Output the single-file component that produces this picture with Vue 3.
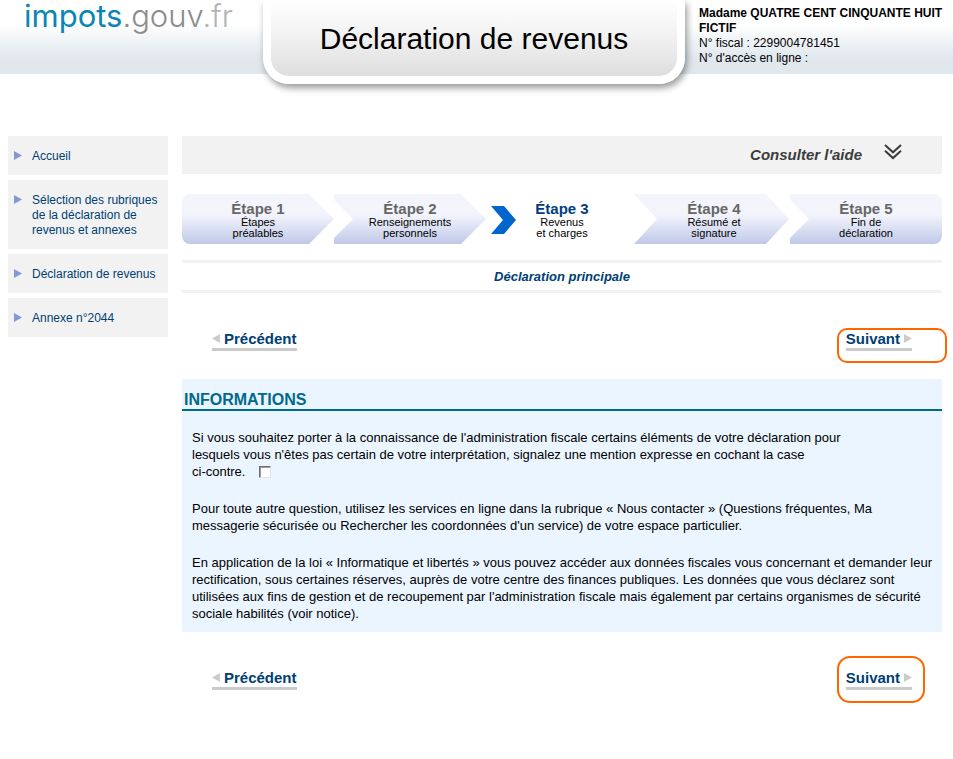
<script setup>
import { ref } from 'vue'

const menu = [
  'Accueil',
  'Sélection des rubriques de la déclaration de revenus et annexes',
  'Déclaration de revenus',
  'Annexe n°2044',
]

const steps = [
  { title: 'Étape 1', lines: ['Étapes', 'préalables'], kind: 'first' },
  { title: 'Étape 2', lines: ['Renseignements', 'personnels'], kind: 'middle' },
  { title: 'Étape 3', lines: ['Revenus', 'et charges'], kind: 'current' },
  { title: 'Étape 4', lines: ['Résumé et', 'signature'], kind: 'next' },
  { title: 'Étape 5', lines: ['Fin de', 'déclaration'], kind: 'last' },
]

const mention = ref(false)
</script>

<template>
  <div class="page">
    <header class="top">
      <a class="logo" href="#"><span class="logo-blue">impots</span><span class="logo-grey">.gouv</span><span class="logo-light">.fr</span></a>
      <h1 class="banner">Déclaration de revenus</h1>
      <div class="user">
        <strong>Madame QUATRE CENT CINQUANTE HUIT FICTIF</strong>
        <span>N° fiscal : 2299004781451</span>
        <span>N° d'accès en ligne :</span>
      </div>
    </header>

    <div class="columns">
      <nav class="side">
        <a v-for="item in menu" :key="item" class="side-link" href="#">
          <svg class="side-arrow" width="8" height="9" viewBox="0 0 8 9"><path d="M0 0 L8 4.5 L0 9 Z" fill="#8399d6" /></svg>
          <span>{{ item }}</span>
        </a>
      </nav>

      <main class="main">
        <button class="help" type="button">
          <span>Consulter l'aide</span>
          <svg width="18" height="17" viewBox="0 0 18 17" fill="none" stroke="#3c3c3c" stroke-width="2">
            <path d="M1 1 L9 8.3 L17 1" />
            <path d="M1 6.8 L9 14.1 L17 6.8" />
          </svg>
        </button>

        <ol class="steps">
          <li v-for="step in steps" :key="step.title" class="step" :class="step.kind">
            <svg v-if="step.kind === 'current'" class="marker" width="25" height="28" viewBox="0 0 25 28"><path d="M0 0 H13 L25 14 L13 28 H0 L12 14 Z" fill="#0066cc" /></svg>
            <span class="step-title">{{ step.title }}</span>
            <span v-for="line in step.lines" :key="line" class="step-line">{{ line }}</span>
          </li>
        </ol>

        <h2 class="band">Déclaration principale</h2>

        <div class="pager">
          <a class="page-link" href="#">
            <svg width="8" height="9" viewBox="0 0 8 9"><path d="M8 0 L0 4.5 L8 9 Z" fill="#cbcbcb" /></svg>
            <span>Précédent</span>
          </a>
          <a class="page-link next-link" href="#">
            <span>Suivant</span>
            <svg width="8" height="9" viewBox="0 0 8 9"><path d="M0 0 L8 4.5 L0 9 Z" fill="#cbcbcb" /></svg>
            <i class="ring ring-wide"></i>
          </a>
        </div>

        <section class="info">
          <h3>INFORMATIONS</h3>
          <div class="info-body">
            <p class="mention">
              <label for="mention">Si vous souhaitez porter à la connaissance de l'administration fiscale certains éléments de votre déclaration pour lesquels vous n'êtes pas certain de votre interprétation, signalez une mention expresse en cochant la case <span class="nowrap">ci-contre.</span></label>
              <input id="mention" v-model="mention" type="checkbox" />
            </p>
            <p>Pour toute autre question, utilisez les services en ligne dans la rubrique « Nous contacter » (Questions fréquentes, Ma messagerie sécurisée ou Rechercher les coordonnées d'un service) de votre espace particulier.</p>
            <p>En application de la loi « Informatique et libertés » vous pouvez accéder aux données fiscales vous concernant et demander leur rectification, sous certaines réserves, auprès de votre centre des finances publiques. Les données que vous déclarez sont utilisées aux fins de gestion et de recoupement par l'administration fiscale mais également par certains organismes de sécurité sociale habilités (voir notice).</p>
          </div>
        </section>

        <div class="pager">
          <a class="page-link" href="#">
            <svg width="8" height="9" viewBox="0 0 8 9"><path d="M8 0 L0 4.5 L8 9 Z" fill="#cbcbcb" /></svg>
            <span>Précédent</span>
          </a>
          <a class="page-link next-link" href="#">
            <span>Suivant</span>
            <svg width="8" height="9" viewBox="0 0 8 9"><path d="M0 0 L8 4.5 L0 9 Z" fill="#cbcbcb" /></svg>
            <i class="ring ring-tall"></i>
          </a>
        </div>
      </main>
    </div>
  </div>
</template>

<style>
body {
  background: #fff;
}
</style>

<style scoped>
.page {
  padding-bottom: 40px;
  font-family: "Liberation Sans", Arial, sans-serif;
  color: #000;
}
.page a {
  text-decoration: none;
}
.top {
  display: grid;
  grid-template-columns: 1fr 422px 268px;
  align-items: start;
  height: 74px;
  background: linear-gradient(#fff 24px, #e0e8ee 58px);
}
.logo {
  padding-left: 24px;
  font-family: Inter, "Liberation Sans", sans-serif;
  font-size: 31px;
  font-weight: 300;
  line-height: 32px;
  white-space: nowrap;
}
.logo-blue {
  color: #0a86b4;
  font-weight: 400;
}
.logo-grey {
  color: #8c8c8c;
}
.logo-light {
  color: #b4b4b4;
}
.banner {
  margin: 0;
  height: 76px;
  border: 8px solid #fff;
  border-top: 0;
  border-radius: 0 0 26px 26px;
  background: linear-gradient(#fff, #f2f2f2 35px, #dedede) padding-box;
  box-shadow: 2px 4px 7px rgba(0, 0, 0, 0.4);
  font-size: 30px;
  font-weight: 400;
  line-height: 77px;
  text-align: center;
}
.user {
  display: flex;
  flex-direction: column;
  padding: 6px 8px 0 14px;
  font-size: 12px;
  line-height: 15px;
}
.columns {
  display: flex;
  align-items: flex-start;
  gap: 14px;
  padding: 62px 11px 0 8px;
}
.side {
  flex: 0 0 160px;
  display: flex;
  flex-direction: column;
  gap: 5px;
}
.side-link {
  display: flex;
  align-items: flex-start;
  gap: 10px;
  padding: 13px 4px 11px 6px;
  background: #f2f2f2;
  color: #003e73;
  font-size: 12px;
  line-height: 15px;
}
.side-arrow {
  flex: none;
  margin-top: 2px;
}
.main {
  flex: 1;
  min-width: 0;
}
.help {
  display: flex;
  align-items: center;
  justify-content: flex-end;
  gap: 22px;
  width: 100%;
  height: 38px;
  padding: 0 40px 2px 0;
  border: 0;
  background: #f2f2f2;
  color: #3c3c3c;
  font: italic bold 15px "Liberation Sans", Arial, sans-serif;
}
.help svg {
  margin-bottom: 4px;
}
.steps {
  display: grid;
  grid-template-columns: 152fr 152fr 148fr 156fr 152fr;
  margin: 20px 0 0;
  padding: 0;
  list-style: none;
}
.step {
  display: flex;
  flex-direction: column;
  align-items: center;
  height: 43px;
  padding-top: 7px;
  background: linear-gradient(#f4f5fc 40%, #bfc8e8);
  font-size: 11px;
  line-height: 11px;
}
.step-title {
  color: #666;
  font-size: 15px;
  font-weight: 700;
  line-height: 16px;
}
.first {
  border-radius: 8px 0 0 8px;
  clip-path: polygon(0 0, calc(100% - 25px) 0, 100% 50%, calc(100% - 25px) 100%, 0 100%);
}
.middle {
  clip-path: polygon(0 0, calc(100% - 25px) 0, 100% 50%, calc(100% - 25px) 100%, 0 100%, 0 88%, 19px 50%, 0 12%);
}
.current {
  position: relative;
  padding-left: 4px;
  background: none;
}
.current .step-title {
  color: #003e80;
}
.marker {
  position: absolute;
  left: 5px;
  top: 12px;
}
.next {
  padding-left: 4px;
  clip-path: polygon(0 0, calc(100% - 24px) 0, calc(100% - 1px) 50%, calc(100% - 24px) 100%, 0 100%, 23px 50%);
}
.last {
  border-radius: 0 8px 8px 0;
  clip-path: polygon(0 0, 100% 0, 100% 100%, 0 100%, 0 88%, 19px 50%, 0 12%);
}
.band {
  margin: 16px 0 0;
  border: 3px solid #f2f2f2;
  border-width: 3px 0;
  color: #003e73;
  font-size: 13px;
  font-style: italic;
  line-height: 27px;
  text-align: center;
}
.pager {
  display: flex;
  justify-content: space-between;
  padding: 37px 30px 0;
}
.page-link {
  display: flex;
  align-items: center;
  gap: 4px;
  border-bottom: 3px solid #cbcbcb;
  color: #003e73;
  font-size: 15px;
  font-weight: 700;
  line-height: 18px;
}
.page-link svg {
  margin-bottom: 2px;
}
.next-link {
  position: relative;
}
.ring {
  position: absolute;
  border: 2px solid #ff6600;
}
.ring-wide {
  inset: -2px -35px -15px -9px;
  border-radius: 10px;
}
.ring-tall {
  inset: -13px -13px -16px -9px;
  border-radius: 13px;
}
.info {
  margin-top: 28px;
  background: #eaf5ff;
}
.info h3 {
  margin: 0;
  padding: 11px 2px 0;
  border-bottom: 2px solid #006a8a;
  color: #006a8a;
  font-size: 16px;
  line-height: 19px;
}
.info-body {
  display: flex;
  flex-direction: column;
  gap: 20px;
  padding: 18px 8px 10px 10px;
  font-size: 13px;
  line-height: 17px;
}
.info-body p {
  margin: 0;
}
.info-body .mention {
  max-width: 660px;
}
.nowrap {
  white-space: nowrap;
}
.mention input {
  appearance: none;
  box-sizing: border-box;
  width: 12px;
  height: 12px;
  margin: 0 0 0 10px;
  border: 1px solid;
  border-color: #6f6f6f #e3e3e3 #e3e3e3 #6f6f6f;
  background: #fff;
  box-shadow: inset 1px 1px 0 #9c9c9c;
  vertical-align: -2px;
}
.mention label {
  margin-right: 4px;
}
.mention input:checked {
  background: #003e73;
}
</style>
